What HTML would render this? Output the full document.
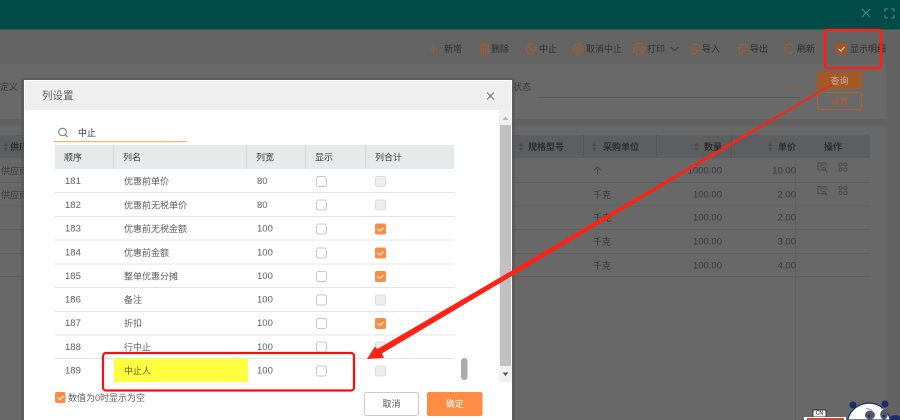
<!DOCTYPE html>
<html><head><meta charset="utf-8"><style>
html,body{margin:0;padding:0;width:900px;height:420px;overflow:hidden;background:#666}
svg{display:block;filter:blur(.3px)}
text{font-family:"Liberation Sans","Noto Sans CJK SC",sans-serif;font-size:9px;dominant-baseline:central}
.d{fill:#2e2e2e}.m{fill:#3a3a3a}.t{fill:#5e5e5e}.h{fill:#3c3c3c}
.ic{fill:none;stroke:#a65c2c;stroke-width:1.100}
.b{font-size:9.500px}
</style></head><body>
<svg width="900" height="420" viewBox="0 0 900 420">
<!-- page background -->
<rect width="900" height="420" fill="#666"/>
<rect width="900" height="29" fill="#004b47"/>
<rect y="29" width="900" height="1" fill="#2f5a58"/>
<rect y="30" width="900" height="34" fill="#646464"/>
<rect y="64" width="886" height="55" fill="#696969"/>
<rect y="119" width="886" height="7" fill="#626262"/>
<rect y="126" width="886" height="294" fill="#686868"/>
<rect x="886" y="30" width="14" height="390" fill="#636363"/>
<!-- window icons -->
<path d="M862 9l8 8M870 9l-8 8" stroke="#5f8583" stroke-width="1" fill="none"/>
<path d="M885 12V9h3M891 9h3v3M894 15v3h-3M888 18h-3v-3" stroke="#5f8583" stroke-width="1" fill="none"/>
<!-- toolbar -->
<path class="ic" d="M433.500 45v8M429.500 49h8"/><text x="444" y="49" class="d">新增</text>
<path class="ic" d="M479.500 45.500h10M481 45.500v8.500h7v-8.500M483 45.500v-1.500h3v1.500M483.500 48v4M485.500 48v4"/><text x="491" y="49" class="d">删除</text>
<circle class="ic" cx="531" cy="49" r="4.800"/><path class="ic" d="M527.700 45.700l6.600 6.600"/><text x="539" y="49" class="d">中止</text>
<circle class="ic" cx="578" cy="49" r="4.800"/><circle class="ic" cx="578" cy="49" r="2"/><text x="586" y="49" class="d">取消中止</text>
<path class="ic" d="M636 47v-3.500h6v3.500M634 47h10v5h-2.500M636.500 52H634v-5M636.500 50h5v4.500h-5z"/><text x="647" y="49" class="d">打印</text>
<path d="M670.500 47l4 3.500 4-3.500" fill="none" stroke="#3a3a3a" stroke-width=".9"/>
<path class="ic" d="M692 46v8h4M693 44.500h5l2 2v5M695 49l3 2-3 2"/><text x="702" y="49" class="d">导入</text>
<path class="ic" d="M739 46v8h4M740 44.500h5l2 2v5M742 49l3 2-3 2"/><text x="750" y="49" class="d">导出</text>
<path class="ic" d="M792.800 45.800a4.500 4.500 0 1 0 1 3.700"/><text x="797" y="49" class="d">刷新</text>
<rect x="836" y="43" width="11" height="11" rx="2" fill="#a3541f"/><path d="M838.500 49l2.500 2 3.500-4" fill="none" stroke="#ddd" stroke-width="1"/>
<text x="850" y="49" class="d">显示明细</text>
<!-- search area -->
<text x="0" y="87" class="m">定义</text>
<text x="513" y="87" class="m">状态</text>
<rect x="538" y="97" width="262" height="1" fill="#5a5a5a"/>
<path d="M788 83l4 4 4-4" fill="none" stroke="#a05a2e" stroke-width=".9"/>
<rect x="817" y="72" width="45" height="17" rx="1.500" fill="#a55a26"/><text x="839.500" y="81" text-anchor="middle" fill="#c8b2a0">查询</text>
<rect x="817.500" y="92.500" width="44" height="17" rx="1.500" fill="none" stroke="#ab6232"/><text x="839.500" y="101.500" text-anchor="middle" fill="#ab6436">设置</text>
<!-- background table -->
<rect y="135" width="870" height="23" fill="#5c5e60"/>
<g fill="#5f5f5f">
<rect y="182" width="870" height="1"/><rect y="205.500" width="870" height="1"/><rect y="229" width="870" height="1"/><rect y="253" width="870" height="1"/><rect y="276" width="870" height="1"/>
</g>
<rect x="795" y="135" width="1" height="285" fill="#616161"/>
<rect x="656" y="135" width="1" height="23" fill="#555"/><rect x="731" y="135" width="1" height="23" fill="#555"/><rect x="583" y="135" width="1" height="23" fill="#555"/>
<g fill="#4a4c4e">
<path d="M3 146l2.500-3 2.500 3zM3 148l2.500 3 2.500-3z"/>
<path d="M518.500 146l2.500-3 2.500 3zM518.500 148l2.500 3 2.500-3z"/>
<path d="M592 146l2.500-3 2.500 3zM592 148l2.500 3 2.500-3z"/>
<path d="M694 146l2.500-3 2.500 3zM694 148l2.500 3 2.500-3z"/>
<path d="M768 146l2.500-3 2.500 3zM768 148l2.500 3 2.500-3z"/>
</g>
<text x="10" y="147" class="d" font-weight="bold">供应</text>
<text x="528" y="147" class="d" font-weight="bold">规格型号</text>
<text x="603" y="147" class="d" font-weight="bold">采购单位</text>
<text x="704" y="147" class="d" font-weight="bold">数量</text>
<text x="778" y="147" class="d" font-weight="bold">单价</text>
<text x="824" y="147" class="d" font-weight="bold">操作</text>
<text x="1" y="171" class="m">供应商</text>
<text x="1" y="195" class="m">供应商</text>
<text x="593" y="171" class="m">个</text>
<text x="593" y="195" class="m">千克</text><text x="593" y="218" class="m">千克</text><text x="593" y="242" class="m">千克</text><text x="593" y="266" class="m">千克</text>
<g text-anchor="end">
<text x="722" y="171" class="m b">1000.00</text><text x="722" y="195" class="m b">100.00</text><text x="722" y="218" class="m b">100.00</text><text x="722" y="242" class="m b">100.00</text><text x="722" y="266" class="m b">100.00</text>
<text x="796" y="171" class="m b">10.00</text><text x="796" y="195" class="m b">2.00</text><text x="796" y="218" class="m b">2.00</text><text x="796" y="242" class="m b">3.00</text><text x="796" y="266" class="m b">4.00</text>
</g>
<g fill="none" stroke="#444" stroke-width=".8">
<path d="M825 170h-7v-7h8v3M820 165h4M820 167h2"/><circle cx="824" cy="169" r="1.500"/><path d="M825 170l2 1.500"/>
<rect x="839" y="163" width="3" height="3" rx="1"/><rect x="844" y="163" width="3" height="3" rx="1"/><rect x="839" y="168" width="3" height="3" rx="1"/><rect x="844" y="168" width="3" height="3" rx="1"/>
<path d="M825 193.500h-7v-7h8v3M820 188.500h4M820 190.500h2"/><circle cx="824" cy="192.500" r="1.500"/><path d="M825 193.500l2 1.500"/>
<rect x="839" y="186.500" width="3" height="3" rx="1"/><rect x="844" y="186.500" width="3" height="3" rx="1"/><rect x="839" y="191.500" width="3" height="3" rx="1"/><rect x="844" y="191.500" width="3" height="3" rx="1"/>
</g>
<!-- modal -->
<rect x="21" y="78" width="494" height="342" fill="#555" opacity=".55"/>
<rect x="24" y="80" width="488" height="340" fill="#fff"/>
<rect x="25" y="81" width="486" height="29" fill="#efefef"/>
<text x="42" y="96" fill="#5e5e5e" style="font-size:10.500px">列设置</text>
<path d="M487 92.500l7 7M494 92.500l-7 7" stroke="#666" stroke-width=".9" fill="none"/>
<!-- scrollbar -->
<rect x="499" y="110" width="12" height="272" fill="#f1f1f1"/>
<rect x="500" y="125" width="11" height="241" fill="#c1c1c1"/>
<path d="M502.500 120l3-3.500 3 3.500z" fill="#b5b5b5"/><path d="M502.500 372.500h6l-3 3.500z" fill="#555"/>
<!-- search -->
<circle cx="62.500" cy="132" r="3.800" fill="none" stroke="#666" stroke-width=".9"/><path d="M65.500 135l2 2" stroke="#666" stroke-width=".9"/>
<text x="78" y="133" fill="#333">中止</text>
<rect x="54" y="141" width="133" height="1.200" fill="#fdae78"/>
<!-- table head -->
<rect x="55" y="145" width="399" height="24" fill="#e8e9eb"/>
<g fill="#d6d6d6"><rect x="113" y="145" width="1" height="24"/><rect x="246" y="145" width="1" height="24"/><rect x="305" y="145" width="1" height="24"/><rect x="365" y="145" width="1" height="24"/></g>
<text x="64" y="157.500" class="h">顺序</text><text x="123" y="157.500" class="h">列名</text><text x="256" y="157.500" class="h">列宽</text><text x="315" y="157.500" class="h">显示</text><text x="375" y="157.500" class="h">列合计</text>
<g fill="#e4e4e4">
<rect x="55" y="192" width="400" height="1"/><rect x="55" y="216" width="400" height="1"/><rect x="55" y="239.500" width="400" height="1"/><rect x="55" y="263.500" width="400" height="1"/><rect x="55" y="287" width="400" height="1"/><rect x="55" y="311" width="400" height="1"/><rect x="55" y="334.500" width="400" height="1"/><rect x="55" y="358" width="400" height="1"/>
</g>
<!-- rows -->
<rect x="114" y="358.500" width="134" height="23.500" fill="#ffff40"/>
<text x="65" y="181.500" class="t b">181</text><text x="124" y="181.500" class="t">优惠前单价</text><text x="257" y="181.500" class="t b">80</text>
<text x="65" y="205.500" class="t b">182</text><text x="124" y="205.500" class="t">优惠前无税单价</text><text x="257" y="205.500" class="t b">80</text>
<text x="65" y="229" class="t b">183</text><text x="124" y="229" class="t">优惠前无税金额</text><text x="257" y="229" class="t b">100</text>
<text x="65" y="253" class="t b">184</text><text x="124" y="253" class="t">优惠前金额</text><text x="257" y="253" class="t b">100</text>
<text x="65" y="276.500" class="t b">185</text><text x="124" y="276.500" class="t">整单优惠分摊</text><text x="257" y="276.500" class="t b">100</text>
<text x="65" y="300" class="t b">186</text><text x="124" y="300" class="t">备注</text><text x="257" y="300" class="t b">100</text>
<text x="65" y="323.500" class="t b">187</text><text x="124" y="323.500" class="t">折扣</text><text x="257" y="323.500" class="t b">100</text>
<text x="65" y="347.500" class="t b">188</text><text x="124" y="347.500" class="t">行中止</text><text x="257" y="347.500" class="t b">100</text>
<text x="65" y="371" class="t b">189</text><text x="124" y="371" fill="#5a5a20">中止人</text><text x="257" y="371" class="t b">100</text>
<!-- show checkboxes -->
<g fill="#fff" stroke="#c8c8c8">
<rect x="316.500" y="176.500" width="10" height="10" rx="2"/><rect x="316.500" y="200" width="10" height="10" rx="2"/><rect x="316.500" y="224" width="10" height="10" rx="2"/><rect x="316.500" y="248" width="10" height="10" rx="2"/><rect x="316.500" y="271.500" width="10" height="10" rx="2"/><rect x="316.500" y="295" width="10" height="10" rx="2"/><rect x="316.500" y="318.500" width="10" height="10" rx="2"/><rect x="316.500" y="342" width="10" height="10" rx="2"/><rect x="316.500" y="366" width="10" height="10" rx="2"/>
</g>
<!-- sum disabled -->
<g fill="#eee" stroke="#dcdcdc">
<rect x="375.500" y="176.500" width="10" height="10" rx="2"/><rect x="375.500" y="200" width="10" height="10" rx="2"/><rect x="375.500" y="295" width="10" height="10" rx="2"/><rect x="375.500" y="342" width="10" height="10" rx="2"/><rect x="375.500" y="366" width="10" height="10" rx="2"/>
</g>
<!-- sum checked -->
<g fill="#ff8c42"><rect x="375" y="223.500" width="11" height="11" rx="2"/><rect x="375" y="247.500" width="11" height="11" rx="2"/><rect x="375" y="271" width="11" height="11" rx="2"/><rect x="375" y="318" width="11" height="11" rx="2"/></g>
<g fill="none" stroke="#fff" stroke-width="1.100"><path d="M377.500 229l2.500 2 3.500-3.500"/><path d="M377.500 253l2.500 2 3.500-3.500"/><path d="M377.500 276.500l2.500 2 3.500-3.500"/><path d="M377.500 323.500l2.500 2 3.500-3.500"/></g>
<rect x="461" y="358" width="6.500" height="22" rx="3" fill="#ababab"/>
<!-- footer -->
<rect x="55" y="392" width="10.500" height="11" rx="2" fill="#ff8c42"/><path d="M57.500 397.500l2.500 2 3.500-3.500" fill="none" stroke="#fff" stroke-width="1.100"/>
<text x="68" y="398" class="t">数值为0时显示为空</text>
<rect x="364.500" y="392.500" width="54" height="23" rx="2" fill="#fff" stroke="#ccc"/><text x="391.500" y="404" text-anchor="middle" fill="#555">取消</text>
<rect x="427" y="392" width="55.500" height="24" rx="2" fill="#ff8c42"/><text x="454.700" y="404" text-anchor="middle" fill="#fff">确定</text>
<!-- annotations -->
<rect x="825" y="30" width="56" height="38" rx="2" fill="none" stroke="#ff1e12" stroke-width="2.500"/>
<rect x="103" y="353" width="251" height="37.500" rx="3" fill="none" stroke="#ff0d0d" stroke-width="2.200"/>
<path d="M832 83.500l.8 1.400L381.800 353.500l2.200 4.500-17 1 8-12.500 2.500 2.500z" fill="#ff2215"/>
<!-- sticker -->
<rect x="813" y="410" width="13" height="7" fill="#eee" stroke="#222" stroke-width=".8"/>
<text x="819.500" y="413.500" text-anchor="middle" fill="#111" style="font-size:5px">CN</text>
<rect x="804" y="417" width="42" height="3" fill="#fff"/>
<rect x="807" y="418" width="37" height="2" fill="#d6452a"/>
<circle cx="853" cy="405" r="3.500" fill="#1d2b6b"/><circle cx="885" cy="404" r="3.500" fill="#1d2b6b"/>
<path d="M847.600 420A22 22 0 0 1 890.400 420z" fill="#fff" stroke="#1d2b6b" stroke-width="1.200"/>
<ellipse cx="870" cy="415" rx="5" ry="4.500" fill="#555a66"/><circle cx="869" cy="416" r="1.400" fill="#1d2b6b"/>
<ellipse cx="884" cy="414.500" rx="3.800" ry="5" fill="#555a66"/><circle cx="884" cy="416" r="1.300" fill="#1d2b6b"/>
<path d="M866 408l6 2M880 408l5 1" stroke="#889" stroke-width=".8" fill="none"/>
<path d="M890 417c4-3 8-2 10 0v3h-9z" fill="#1d2b6b"/>
</svg>
</body></html>
